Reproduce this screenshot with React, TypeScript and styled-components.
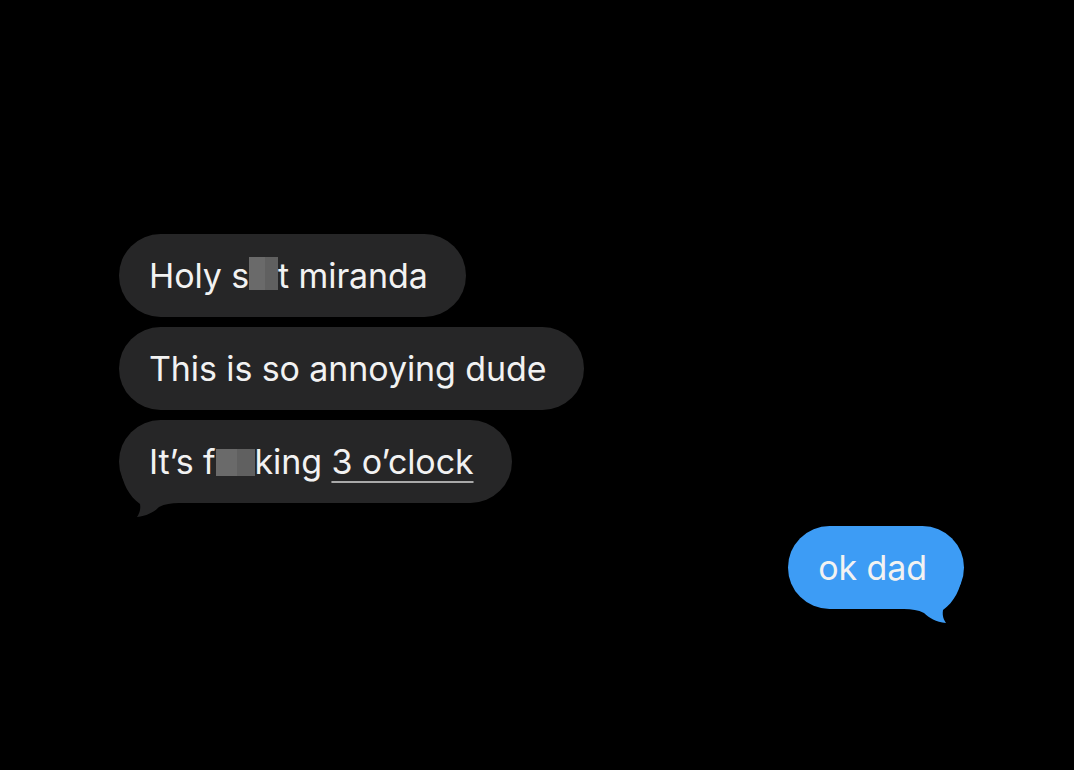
import styled, { createGlobalStyle } from "styled-components";

const GlobalStyle = createGlobalStyle`
  html, body {
    margin: 0;
    background: #000;
  }
  body {
    font-family: Inter, "Liberation Sans", sans-serif;
    -webkit-font-smoothing: antialiased;
  }
`;

const Screen = styled.main`
  width: 1074px;
  height: 770px;
  box-sizing: border-box;
  padding: 234px 110px 0 119px;
  background: #000;
  display: flex;
  flex-flow: column;
  overflow: hidden;
`;

const Group = styled.section<{ $mine?: boolean }>`
  display: flex;
  flex-flow: column;
  align-items: ${(p) => (p.$mine ? "flex-end" : "flex-start")};
  gap: 10px;
  margin-top: ${(p) => (p.$mine ? "23px" : "0")};
`;

const Bubble = styled.div<{ $mine?: boolean }>`
  position: relative;
  height: 83px;
  box-sizing: border-box;
  padding: ${(p) => (p.$mine ? "0 37px 0 30px" : "0 38px 0 30px")};
  border-radius: 42px;
  background: ${(p) => (p.$mine ? "#3d9cf5" : "#262627")};
  color: #f2f2f2;
  font-size: 34px;
  line-height: 83px;
  letter-spacing: -0.1px;
  white-space: nowrap;
  z-index: 1;

  svg.tail {
    position: absolute;
    bottom: -14px;
    width: 60px;
    height: 48px;
    z-index: -1;
  }
`;

const Tail = styled.svg<{ $mine?: boolean }>`
  ${(p) => (p.$mine ? "right: 0; transform: scaleX(-1);" : "left: 0;")}
`;

const Censor = styled.span<{ $w: number; $h: number }>`
  display: inline-block;
  width: ${(p) => p.$w}px;
  height: ${(p) => p.$h}px;
  vertical-align: -2px;
  background: linear-gradient(90deg, #6a6a6a 0 55%, #606060 55% 100%);
`;

const Link = styled.span`
  text-decoration: underline;
  text-decoration-color: #a9a9a9;
  text-decoration-thickness: 2px;
  text-underline-offset: 7px;
`;

function BubbleTail({ mine, fill }: { mine?: boolean; fill: string }) {
  return (
    <Tail className="tail" $mine={mine} viewBox="0 0 60 48">
      <path
        d="M2 0 C3 14 10 27 21 35 C22 41 20 45 18 48 C28 47 35 43 40 38 C46 35 52 34 60 34 L60 0 Z"
        fill={fill}
      />
    </Tail>
  );
}

export default function App() {
  return (
    <>
      <GlobalStyle />
      <Screen>
        <Group>
          <Bubble>
            Holy s<Censor $w={29} $h={33} />t miranda
          </Bubble>
          <Bubble>This is so annoying dude</Bubble>
          <Bubble>
            It’s f<Censor $w={39} $h={27} />king <Link>3 o’clock</Link>
            <BubbleTail fill="#262627" />
          </Bubble>
        </Group>
        <Group $mine>
          <Bubble $mine>
            ok dad
            <BubbleTail mine fill="#3d9cf5" />
          </Bubble>
        </Group>
      </Screen>
    </>
  );
}
